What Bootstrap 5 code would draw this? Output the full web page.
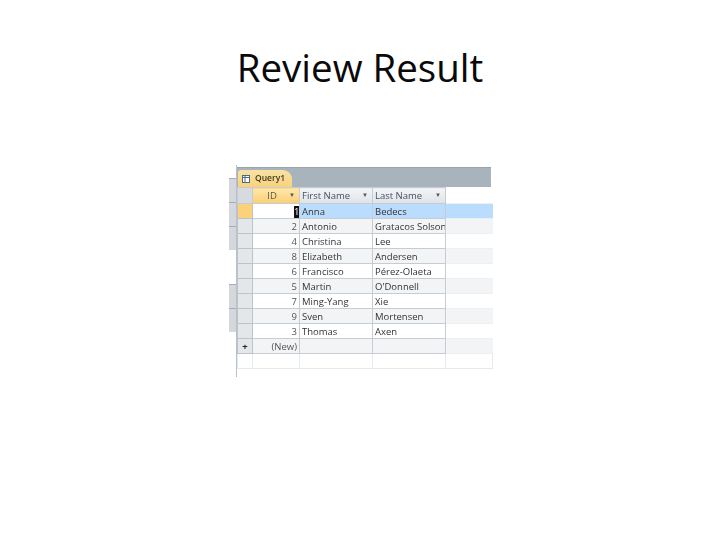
<!DOCTYPE html>
<html lang="en"><head><meta charset="utf-8"><title>Review Result</title>
<link href="https://cdn.jsdelivr.net/npm/bootstrap@5.3.0/dist/css/bootstrap.min.css" rel="stylesheet">
<style>
html,body{background:#fff;height:540px;overflow:hidden}
.slide-title{font-family:"Open Sans","Liberation Sans",sans-serif;font-size:38.5px;line-height:52px;color:#0a0a0a;margin:0;padding-top:41px;height:165px;text-align:center;font-weight:400}
.shot{width:262px;height:212px;margin-left:229px;font-family:"Open Sans","Liberation Sans",sans-serif;font-size:9.5px;color:#333;filter:blur(.35px)}
.side-rail{width:7px;flex:none;padding-top:13px}
.rail-chunk{background:#d4d7db;border-top:1px solid #aab;height:24px;margin-bottom:0}
.rail-gap{height:34px;background:#fff}
.main-pane{width:255px;flex:none;border-left:1px solid #b9c0c8}
.top-edge{height:3px;background:#fff;border-bottom:1px solid #9aa3ab}
.tab-strip{height:19px;background:#a9b3bc;display:flex;align-items:flex-end}
.doc-tab{width:54px;height:17px;margin-left:1px;background:linear-gradient(#f7e2a6,#fbd27a);border-radius:3px 9px 0 0;display:flex;align-items:center;gap:4px;padding-left:4px;font-weight:600;font-size:8.5px;color:#3a3a20}
.grid-tbl{table-layout:fixed;border-collapse:collapse;width:255px}
.grid-tbl td,.grid-tbl th{height:15px;padding:0 2px;border:1px solid #c6ccd3;white-space:nowrap;overflow:hidden;font-weight:400;line-height:13px}
.grid-tbl th{height:16px;background:linear-gradient(#f3f5f7,#dfe3e8);font-size:9.5px;color:#46505c}
.grid-tbl .h-id{background:linear-gradient(#fde7ab,#fbcf73);text-align:center;color:#5a5a45}
.grid-tbl .h-corner{background:#d7dbe0}
.grid-tbl .pick{background:#e4e7ea;border-color:#bcc3ca;text-align:center;font-weight:700;color:#222}
.grid-tbl .pick-on{background:#fbd27a}
.grid-tbl .num{text-align:right;color:#555}
.grid-tbl .band td:not(.pick){background:#f3f4f5}
.grid-tbl .on td:not(.pick){background:#b9dcff}
.grid-tbl .on .num{background:#fff!important}
.cursor{background:#111;color:#fff;display:inline-block;width:5px;line-height:12px;text-align:center;margin-right:-2px}
.grid-tbl .clear-col,.grid-tbl th.clear-col{background:#fff;border-color:#edf0f2;border-width:0 0 1px 0}
.grid-tbl .on .clear-col{background:#fff}
.grid-tbl .band .clear-col{background:#fff}
.grid-tbl .blank td{border-color:#e6eaee;background:#fff}
.arrow-mark{float:right;font-size:6px;color:#555;margin-right:2px}
.cw-a{width:15px}.cw-b{width:47px}.cw-c{width:73px}.cw-d{width:73px}.cw-e{width:47px}
</style></head>
<body>
<h1 class="slide-title">Review Result</h1>
<div class="shot d-flex">
  <div class="side-rail">
    <div class="rail-chunk"></div><div class="rail-chunk"></div><div class="rail-chunk"></div>
    <div class="rail-gap"></div>
    <div class="rail-chunk"></div><div class="rail-chunk"></div>
  </div>
  <div class="main-pane">
    <div class="top-edge"></div>
    <div class="tab-strip">
      <div class="doc-tab">
        <svg width="9" height="9" viewBox="0 0 9 9"><rect x=".5" y="1.5" width="7" height="7" fill="#fff" stroke="#4a6a8a"/><path d="M.5 3.5h7M3 1.5v7" stroke="#4a6a8a"/></svg>
        <span>Query1</span>
      </div>
    </div>
    <table class="grid-tbl">
      <colgroup><col class="cw-a"><col class="cw-b"><col class="cw-c"><col class="cw-d"><col class="cw-e"></colgroup>
      <tr><th class="h-corner"></th><th class="h-id">ID<span class="arrow-mark">▼</span></th><th>First Name<span class="arrow-mark">▼</span></th><th>Last Name<span class="arrow-mark">▼</span></th><th class="clear-col"></th></tr>
      <tr class="on"><td class="pick pick-on"></td><td class="num"><span class="cursor">1</span></td><td>Anna</td><td>Bedecs</td><td class="clear-col"></td></tr>
      <tr class="band"><td class="pick"></td><td class="num">2</td><td>Antonio</td><td>Gratacos Solsona</td><td class="clear-col"></td></tr>
      <tr><td class="pick"></td><td class="num">4</td><td>Christina</td><td>Lee</td><td class="clear-col"></td></tr>
      <tr class="band"><td class="pick"></td><td class="num">8</td><td>Elizabeth</td><td>Andersen</td><td class="clear-col"></td></tr>
      <tr><td class="pick"></td><td class="num">6</td><td>Francisco</td><td>Pérez-Olaeta</td><td class="clear-col"></td></tr>
      <tr class="band"><td class="pick"></td><td class="num">5</td><td>Martin</td><td>O'Donnell</td><td class="clear-col"></td></tr>
      <tr><td class="pick"></td><td class="num">7</td><td>Ming-Yang</td><td>Xie</td><td class="clear-col"></td></tr>
      <tr class="band"><td class="pick"></td><td class="num">9</td><td>Sven</td><td>Mortensen</td><td class="clear-col"></td></tr>
      <tr><td class="pick"></td><td class="num">3</td><td>Thomas</td><td>Axen</td><td class="clear-col"></td></tr>
      <tr class="band"><td class="pick">+</td><td class="num">(New)</td><td></td><td></td><td class="clear-col"></td></tr>
      <tr class="blank"><td></td><td></td><td></td><td></td><td></td></tr>
    </table>
  </div>
</div>
</body></html>
